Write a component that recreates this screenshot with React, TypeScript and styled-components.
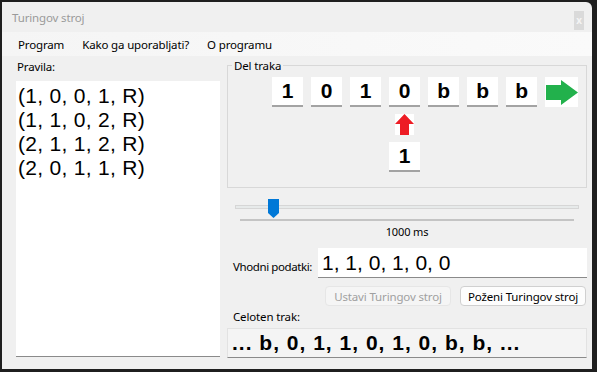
import React from 'react';
import styled, { createGlobalStyle } from 'styled-components';

const GlobalStyle = createGlobalStyle`
  html, body {
    margin: 0;
    padding: 0;
    background: #1f1f1f;
  }
  body {
    font-family: 'Noto Sans', 'Segoe UI', sans-serif;
    font-size: 11.5px;
    letter-spacing: -0.15px;
    color: #000;
  }
`;

const Screen = styled.div`
  width: 597px;
  height: 372px;
  box-sizing: border-box;
  padding: 2px 5px 3px 2px;
  background: #1f1f1f;
`;

const Window = styled.div`
  height: 100%;
  display: flex;
  flex-direction: column;
  background: #f0f0f0;
  border-radius: 0 6px 0 0;
  overflow: hidden;
`;

const TitleBar = styled.div`
  flex: 0 0 30px;
  display: flex;
  align-items: center;
  justify-content: space-between;
  padding: 0 8px 0 10px;
  color: #9a9a9a;
`;

const CloseBox = styled.div`
  width: 10px;
  height: 19px;
  margin-top: 6px;
  background: #dadada;
  color: #f4f4f4;
  font-size: 10px;
  font-weight: bold;
  display: flex;
  align-items: center;
  justify-content: center;
`;

const MenuBar = styled.div`
  flex: 0 0 24px;
  display: flex;
  align-items: center;
  padding-left: 7px;
  background: linear-gradient(to right, #f5f5f5, #fafafa);
`;

const MenuItem = styled.span`
  padding: 0 9px;
  white-space: nowrap;
`;

const Content = styled.div`
  flex: 1;
  min-height: 0;
  display: flex;
  gap: 7px;
  padding: 0 5px 12px 14px;
`;

const LeftPane = styled.div`
  width: 204px;
  display: flex;
  flex-direction: column;
`;

const Label = styled.div`
  line-height: 15px;
  padding-left: 1px;
  white-space: nowrap;
`;

const RulesList = styled.div`
  flex: 1;
  margin-top: 7px;
  background: #fff;
  border-bottom: 1px solid #8a8a8a;
  padding: 3px 2px;
  font-family: 'Liberation Sans', Arial, sans-serif;
  font-size: 21px;
  line-height: 24px;
  letter-spacing: 0.3px;
`;

const RightPane = styled.div`
  flex: 1;
  display: flex;
  flex-direction: column;
`;

const Group = styled.fieldset`
  margin: 2px 0 0;
  padding: 4px 0 15px;
  border: 1px solid #d8d8d8;
  min-width: 0;
`;

const Legend = styled.legend`
  margin-left: 4px;
  padding: 0 2px;
  line-height: 15px;
`;

const TapeGrid = styled.div`
  display: grid;
  grid-template-columns: repeat(7, 31px) 33px;
  grid-template-rows: 30px 21px 30px;
  column-gap: 8px;
  row-gap: 7px;
  margin-left: 44px;
`;

const Cell = styled.div<{ $col?: number }>`
  grid-column: ${(p) => p.$col ?? 'auto'};
  box-sizing: border-box;
  background: #fff;
  border-bottom: 2px solid #a3a3a3;
  display: flex;
  align-items: center;
  justify-content: center;
  font-family: 'Liberation Sans', Arial, sans-serif;
  font-weight: bold;
  font-size: 21px;
`;

const ArrowBox = styled.div<{ $col?: number }>`
  grid-column: ${(p) => p.$col ?? 'auto'};
  background: #fff;
  display: flex;
  justify-content: center;
  align-items: center;
`;

const SliderArea = styled.div`
  padding: 11px 8px 0;
`;

const SliderBody = styled.div`
  position: relative;
  height: 20px;
`;

const Track = styled.div`
  position: relative;
  top: 6px;
  height: 2px;
  background: #e7eaea;
  border: 1px solid #d6d6d6;
`;

const Thumb = styled.svg`
  position: absolute;
  top: 0;
`;

const Ticks = styled.div`
  margin: 0 5px;
  height: 2px;
  background: #c4c4c4;
`;

const SpeedLabel = styled.div`
  text-align: center;
  font-size: 11px;
  line-height: 14px;
  margin-top: 4px;
`;

const InputRow = styled.div`
  display: flex;
  align-items: center;
  margin-top: 9px;
  padding-left: 6px;
`;

const InputLabel = styled.div`
  width: 85px;
  margin-top: 6px;
  white-space: nowrap;
  letter-spacing: -0.4px;
`;

const TextInput = styled.div`
  flex: 1;
  height: 30px;
  box-sizing: border-box;
  background: #fff;
  border-bottom: 1px solid #8a8a8a;
  padding: 2px 4px;
  font-family: 'Liberation Sans', Arial, sans-serif;
  font-size: 21px;
  line-height: 25px;
  letter-spacing: 0;
`;

const ButtonRow = styled.div`
  display: flex;
  justify-content: flex-end;
  gap: 9px;
  margin-top: 8px;
  padding-right: 1px;
`;

const Button = styled.button<{ $disabled?: boolean }>`
  width: 126px;
  height: 20px;
  padding: 0;
  border-radius: 4px;
  font-family: inherit;
  font-size: 11.5px;
  letter-spacing: -0.15px;
  white-space: nowrap;
  border: 1px solid ${(p) => (p.$disabled ? '#e6e6e6' : '#d0d0d0')};
  background: ${(p) => (p.$disabled ? '#f5f5f5' : '#fdfdfd')};
  color: ${(p) => (p.$disabled ? '#a0a0a0' : '#000')};
`;

const TapeLabel = styled(Label)`
  margin-top: 3px;
  padding-left: 6px;
`;

const FullTape = styled.div`
  margin-top: 4px;
  height: 30px;
  box-sizing: border-box;
  background: #f4f4f4;
  border: 1px solid #e2e2e2;
  border-bottom: 1px solid #8a8a8a;
  padding: 2px 4px;
  font-family: 'Liberation Sans', Arial, sans-serif;
  font-weight: bold;
  font-size: 21px;
  line-height: 24px;
  letter-spacing: 1px;
  white-space: nowrap;
`;

const rules = ['(1, 0, 0, 1, R)', '(1, 1, 0, 2, R)', '(2, 1, 1, 2, R)', '(2, 0, 1, 1, R)'];
const tape = ['1', '0', '1', '0', 'b', 'b', 'b'];
const speed = 1000;
const thumbLeft = 33 + (speed - 1000) / 20;

export default function App() {
  return (
    <>
      <GlobalStyle />
      <Screen>
        <Window>
          <TitleBar>
            <span>Turingov stroj</span>
            <CloseBox>x</CloseBox>
          </TitleBar>
          <MenuBar>
            <MenuItem>Program</MenuItem>
            <MenuItem>Kako ga uporabljati?</MenuItem>
            <MenuItem>O programu</MenuItem>
          </MenuBar>
          <Content>
            <LeftPane>
              <Label style={{ marginTop: 3 }}>Pravila:</Label>
              <RulesList>
                {rules.map((r) => (
                  <div key={r}>{r}</div>
                ))}
              </RulesList>
            </LeftPane>
            <RightPane>
              <Group>
                <Legend>Del traka</Legend>
                <TapeGrid>
                  {tape.map((c, i) => (
                    <Cell key={i}>{c}</Cell>
                  ))}
                  <ArrowBox>
                    <svg width="33" height="31" viewBox="0 0 33 31">
                      <polygon points="1,8 16,8 16,3 33,15.5 16,28 16,23 1,23" fill="#22b14c" />
                    </svg>
                  </ArrowBox>
                  <ArrowBox $col={4} style={{ justifySelf: 'center', width: 19 }}>
                    <svg width="19" height="21" viewBox="0 0 19 21">
                      <polygon points="9.5,0 19,10 14,10 14,21 5,21 5,10 0,10" fill="#ed1c24" />
                    </svg>
                  </ArrowBox>
                  <Cell $col={4}>1</Cell>
                </TapeGrid>
              </Group>
              <SliderArea>
                <SliderBody>
                  <Track />
                  <Thumb width="11" height="19" viewBox="0 0 11 19" style={{ left: thumbLeft }}>
                    <polygon points="0,0 11,0 11,14 5.5,19 0,14" fill="#0078d7" />
                  </Thumb>
                </SliderBody>
                <Ticks />
                <SpeedLabel>{speed} ms</SpeedLabel>
              </SliderArea>
              <InputRow>
                <InputLabel>Vhodni podatki:</InputLabel>
                <TextInput>1, 1, 0, 1, 0, 0</TextInput>
              </InputRow>
              <ButtonRow>
                <Button $disabled>Ustavi Turingov stroj</Button>
                <Button>Poženi Turingov stroj</Button>
              </ButtonRow>
              <TapeLabel>Celoten trak:</TapeLabel>
              <FullTape>... b, 0, 1, 1, 0, 1, 0, b, b, ...</FullTape>
            </RightPane>
          </Content>
        </Window>
      </Screen>
    </>
  );
}
